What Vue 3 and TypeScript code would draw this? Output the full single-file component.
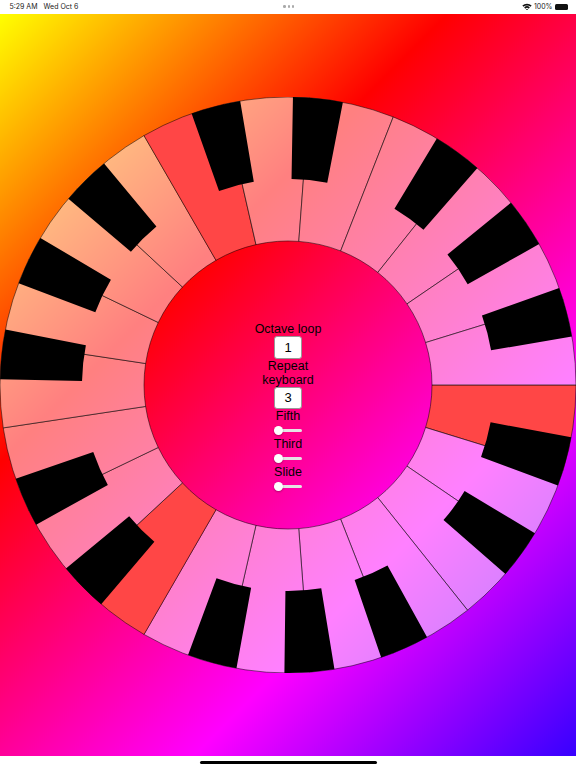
<script setup lang="ts">
const C = 288
const R = 288
const INNER = 144
const BLACK_INNER = 206
const STEP = 360 / 21
const BLACK_HALF = 5

function pt(r: number, deg: number): string {
  const a = (deg * Math.PI) / 180
  return `${(C + r * Math.cos(a)).toFixed(2)} ${(C + r * Math.sin(a)).toFixed(2)}`
}

function sector(r0: number, r1: number, a0: number, a1: number): string {
  return `M${pt(r0, a0)} L${pt(r1, a0)} A${r1} ${r1} 0 0 1 ${pt(r1, a1)} L${pt(r0, a1)} A${r0} ${r0} 0 0 0 ${pt(r0, a0)} Z`
}

const whites = Array.from({ length: 21 }, (_, i) => ({
  d: sector(INNER, R, i * STEP, (i + 1) * STEP),
  root: i % 7 === 0,
}))

const offsets: Record<number, number> = { 1: -1.7, 2: 1.7, 4: -2.45, 5: 0, 6: 2.45 }
const blacks = whites.flatMap((_, i) => {
  const off = offsets[i % 7]
  if (off === undefined) return []
  const mid = i * STEP + off
  return [sector(BLACK_INNER, R, mid - BLACK_HALF, mid + BLACK_HALF)]
})
</script>

<template>
  <div class="screen">
    <header class="status">
      <div class="status-left">
        <span>5:29 AM</span>
        <span>Wed Oct 6</span>
      </div>
      <div class="dots"><i></i><i></i><i></i></div>
      <div class="status-right">
        <svg class="wifi" viewBox="0 0 12 9" width="10" height="7.5">
          <path d="M0.4 3.1A8 8 0 0 1 11.6 3.1L10.2 4.6A6 6 0 0 0 1.8 4.6Z" />
          <path d="M2.6 5.4A4.8 4.8 0 0 1 9.4 5.4L8 6.8A2.9 2.9 0 0 0 4 6.8Z" />
          <path d="M4.8 7.5A1.7 1.7 0 0 1 7.2 7.5L6 8.9Z" />
        </svg>
        <span>100%</span>
        <div class="battery"></div>
      </div>
    </header>

    <main class="stage">
      <svg class="wheel" viewBox="0 0 576 576" width="576" height="576">
        <path
          v-for="(k, i) in whites"
          :key="i"
          :d="k.d"
          :class="k.root ? 'key-root' : 'key-white'"
        />
        <path v-for="(d, i) in blacks" :key="'b' + i" :d="d" class="key-black" />
      </svg>

      <form class="controls" @submit.prevent>
        <label class="label" for="octave">Octave loop</label>
        <input id="octave" class="num" type="text" value="1" />
        <label class="label" for="repeat">Repeat keyboard</label>
        <input id="repeat" class="num" type="text" value="3" />
        <label class="label" for="fifth">Fifth</label>
        <input id="fifth" class="slider" type="range" min="0" max="100" value="0" />
        <label class="label" for="third">Third</label>
        <input id="third" class="slider" type="range" min="0" max="100" value="0" />
        <label class="label" for="slide">Slide</label>
        <input id="slide" class="slider" type="range" min="0" max="100" value="0" />
      </form>
    </main>

    <footer class="home"><div class="home-bar"></div></footer>
  </div>
</template>

<style scoped>
.screen {
  width: 576px;
  height: 768px;
  display: flex;
  flex-direction: column;
  background: #fff;
  overflow: hidden;
  font-family: "Liberation Sans", Arial, sans-serif;
}
.status {
  height: 14px;
  flex: none;
  display: grid;
  grid-template-columns: 1fr auto 1fr;
  align-items: center;
  padding: 0 8px 1px 9.5px;
  box-sizing: border-box;
  font-family: Inter, "Liberation Sans", sans-serif;
  font-size: 7px;
  color: #222;
}
.status-left {
  display: flex;
  gap: 6px;
}
.dots {
  display: flex;
  gap: 2px;
}
.dots i {
  width: 2.4px;
  height: 2.4px;
  border-radius: 50%;
  background: #aaa;
}
.status-right {
  display: flex;
  justify-content: flex-end;
  align-items: center;
  gap: 2px;
}
.wifi path {
  fill: #111;
}
.battery {
  width: 13.5px;
  height: 6px;
  border-radius: 1.5px;
  background: #111;
  box-shadow: 1px 0 0 -1px #777;
}
.stage {
  flex: none;
  height: 742px;
  display: grid;
  place-items: center;
  background: linear-gradient(135deg, #ff0 0%, #f00 34%, #f0f 71%, #00f 108%);
}
.wheel {
  grid-area: 1 / 1;
  display: block;
}
.key-white {
  fill: rgba(255, 255, 255, 0.5);
  stroke: #000;
  stroke-width: 0.5;
}
.key-root {
  fill: #ff4646;
  stroke: #000;
  stroke-width: 0.5;
}
.key-black {
  fill: #000;
}
.controls {
  grid-area: 1 / 1;
  align-self: start;
  margin-top: 308px;
  width: 72px;
  display: flex;
  flex-direction: column;
  align-items: center;
}
.label {
  font-size: 12.5px;
  line-height: 14px;
  text-align: center;
  color: #000;
}
.num {
  width: 27.5px;
  height: 22.5px;
  box-sizing: border-box;
  padding: 0;
  border: 0.5px solid #999;
  border-radius: 3px;
  background: #fff;
  color: #000;
  font: 13px "Liberation Sans", Arial, sans-serif;
  text-align: center;
  outline: none;
}
.slider {
  -webkit-appearance: none;
  appearance: none;
  width: 27.5px;
  height: 14px;
  margin: 0;
  padding: 0;
  background: transparent;
}
.slider::-webkit-slider-runnable-track {
  height: 3px;
  border-radius: 1.5px;
  background: #e4e4e4;
}
.slider::-webkit-slider-thumb {
  -webkit-appearance: none;
  appearance: none;
  width: 9px;
  height: 9px;
  margin-top: -3px;
  border-radius: 50%;
  background: #fff;
  box-shadow: 0 1px 2px rgba(0, 0, 0, 0.3);
}
.home {
  flex: 1;
  display: flex;
  justify-content: center;
  padding-top: 4.5px;
}
.home-bar {
  width: 177px;
  height: 3px;
  border-radius: 1.5px;
  background: #000;
}
</style>
